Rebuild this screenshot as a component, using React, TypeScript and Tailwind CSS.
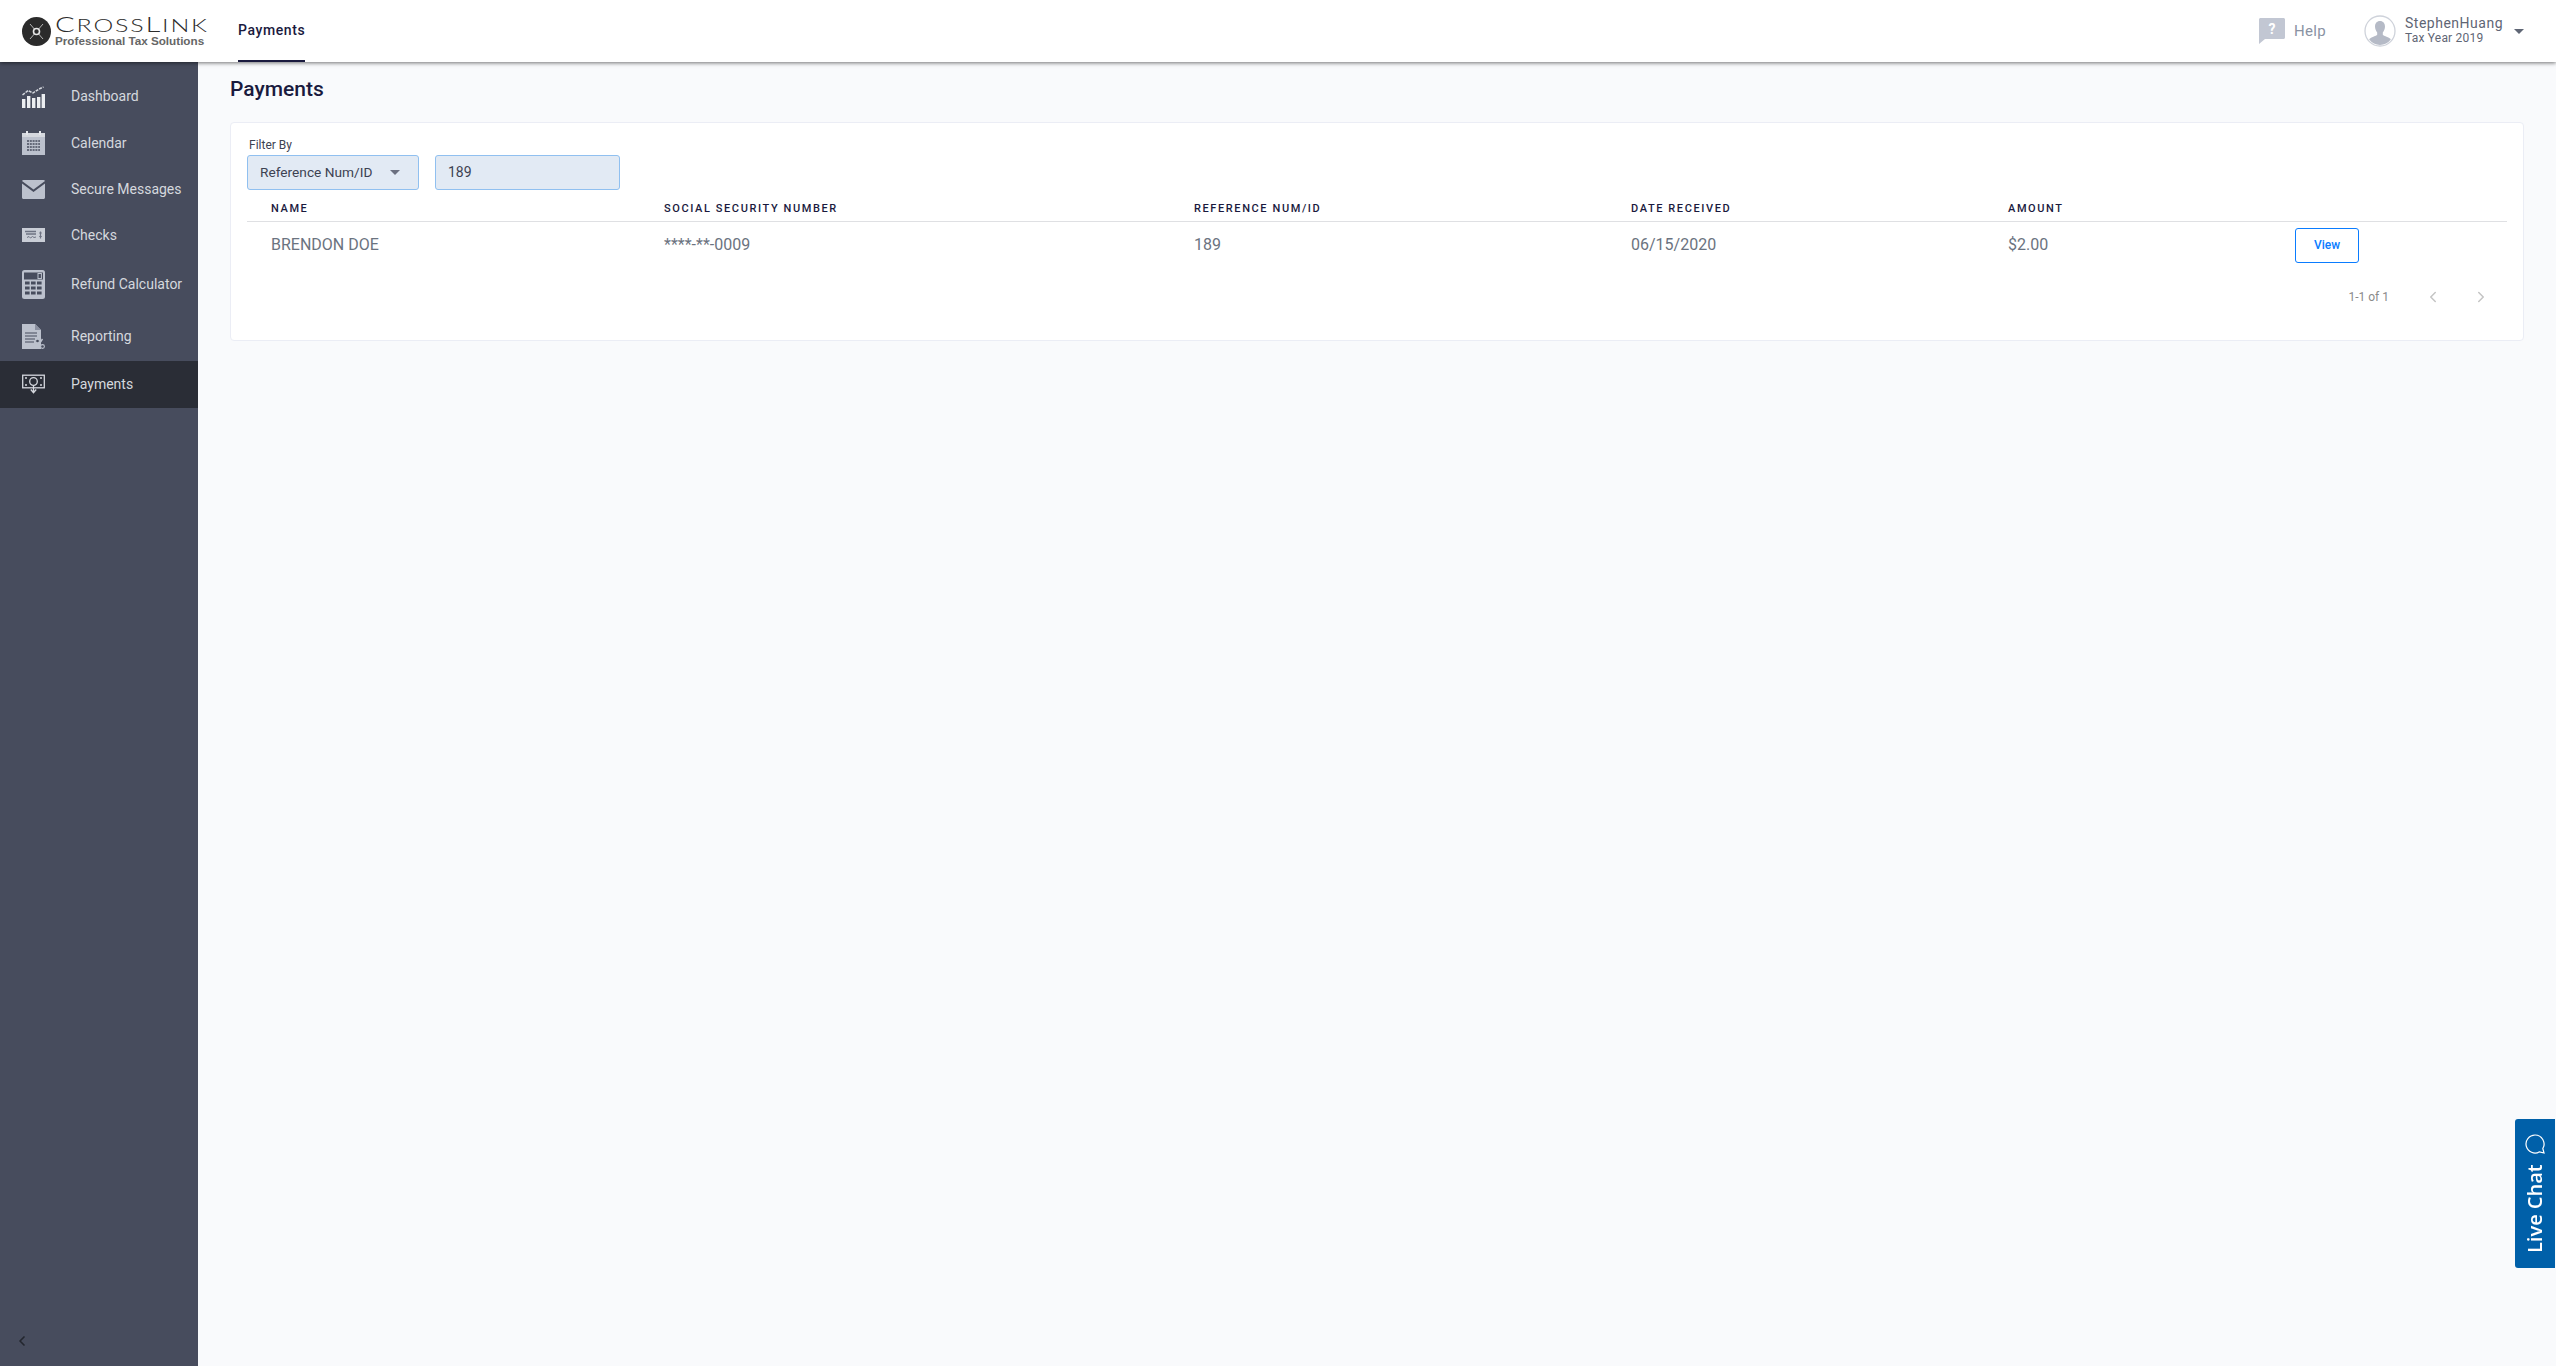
import { ChevronLeft, ChevronRight } from "lucide-react";

const roboto = "font-['Roboto',sans-serif]";

function DashboardIcon() {
  return (
    <svg viewBox="0 0 23 23" className="h-[23px] w-[23px]" fill="#eceef1">
      <rect x="0" y="14" width="3.4" height="9" />
      <rect x="5" y="11" width="3.4" height="12" />
      <rect x="10" y="13" width="3.4" height="10" />
      <rect x="15" y="12" width="3.4" height="11" />
      <rect x="19.6" y="9" width="3.4" height="14" />
      <path d="M0.5 10 L6 5.500 L11 8 L17 4 L21.500 2" fill="none" stroke="#d5d8de" strokeWidth="1.5" strokeDasharray="3 1" />
    </svg>
  );
}

function CalendarIcon() {
  return (
    <svg viewBox="0 0 23 24" className="h-[24px] w-[23px]">
      <path d="M0 2h23v22H0z" fill="#bcc1cd" />
      <rect x="0" y="2" width="23" height="4" fill="#d5d8de" />
      <rect x="4" y="0" width="2" height="4" fill="#e4e6eb" />
      <rect x="17" y="0" width="2" height="4" fill="#e4e6eb" />
      <path d="M5 10h13M5 13h13M5 16h13M5 19h13" stroke="#474c5d" strokeWidth="1.6" strokeDasharray="2 0.8" />
    </svg>
  );
}

function MailIcon() {
  return (
    <svg viewBox="0 0 23 19" className="h-[19px] w-[23px]" fill="#bcc1cd">
      <path d="M1.500 0h20c.6 0 1.200.4 1.500 1L11.500 9.500 0 1c.3-.6.9-1 1.500-1z" />
      <path d="M0 3.500V17.500C0 18.300.7 19 1.500 19h20c.8 0 1.500-.7 1.500-1.500V3.500L11.500 12z" />
    </svg>
  );
}

function CheckIcon() {
  return (
    <svg viewBox="0 0 23 14" className="h-[14px] w-[23px]">
      <rect width="23" height="14" fill="#c9cdd6" />
      <path d="M3 3.500h11M4 6h10" stroke="#6e7383" strokeWidth="1.3" />
      <path d="M5 9.500l2-1 1.500 1.500 2-1.500 1.500 1 2-.5" stroke="#6e7383" strokeWidth="1" fill="none" />
      <path d="M18.500 3.500v7M17.200 5h2.600M17.200 8.500h2.600" stroke="#6e7383" strokeWidth="1.2" />
    </svg>
  );
}

function CalculatorIcon() {
  const cells = [9.5, 14.5, 19.5].flatMap((y) => [3, 9, 15].map((x) => ({ x, y })));
  return (
    <svg viewBox="0 0 23 29" className="h-[29px] w-[23px]">
      <rect width="23" height="29" rx="2.500" fill="#bcc1cd" />
      <rect x="2" y="2.500" width="19" height="7" fill="#474c5d" />
      <rect x="16" y="3.500" width="3.400" height="5" fill="none" stroke="#bcc1cd" strokeWidth="1" />
      {cells.map((c) => (
        <rect key={`${c.x}-${c.y}`} x={c.x} y={c.y + 2} width="4.600" height="3" fill="#474c5d" />
      ))}
    </svg>
  );
}

function ReportIcon() {
  return (
    <svg viewBox="0 0 23 25" className="h-[25px] w-[23px]">
      <path d="M0 0h13l6 6v19H0z" fill="#bcc1cd" />
      <path d="M13 0l6 6h-6z" fill="#8b90a0" />
      <path d="M3 9h12M3 12h12M3 15h10M3 18h9" stroke="#6e7383" strokeWidth="1.3" />
      <path d="M14.500 24l6-9" stroke="#bcc1cd" strokeWidth="1.4" />
      <circle cx="15.500" cy="17" r="1.900" fill="#474c5d" stroke="#bcc1cd" strokeWidth="1.1" />
      <circle cx="20.500" cy="22.500" r="1.900" fill="#474c5d" stroke="#bcc1cd" strokeWidth="1.1" />
    </svg>
  );
}

function PaymentIcon() {
  return (
    <svg viewBox="0 0 23 21" className="h-[21px] w-[23px]" fill="none" stroke="#d5d8de" strokeWidth="1.3">
      <rect x="0.7" y="1.200" width="21.600" height="12.600" fill="#2a2d36" />
      <circle cx="11.500" cy="7.500" r="3.800" />
      <path d="M3 4h2M18 4h2M3 11h2M18 11h2" />
      <path d="M11.500 11.500v6M8.800 15.500l2.700 3.200 2.700-3.200" />
    </svg>
  );
}

const navItems = [
  { label: "Dashboard", h: "h-[47px]", icon: <DashboardIcon /> },
  { label: "Calendar", h: "h-[46px]", icon: <CalendarIcon /> },
  { label: "Secure Messages", h: "h-[46px]", icon: <MailIcon /> },
  { label: "Checks", h: "h-[46px]", icon: <CheckIcon /> },
  { label: "Refund Calculator", h: "h-[53px]", icon: <CalculatorIcon /> },
  { label: "Reporting", h: "h-[50px]", icon: <ReportIcon /> },
  { label: "Payments", h: "h-[47px]", icon: <PaymentIcon />, active: true },
];

function Sidebar() {
  return (
    <aside className="flex w-[198px] shrink-0 flex-col justify-between bg-[#474c5d] pt-[11px]">
      <nav>
        {navItems.map((item) => (
          <div
            key={item.label}
            className={`flex items-center pl-[22px] ${item.h} ${item.active ? "bg-[#2a2d36]" : ""}`}
          >
            <span className="flex w-[49px] shrink-0">{item.icon}</span>
            <span className="text-[14px] text-[#d5d8de]">{item.label}</span>
          </div>
        ))}
      </nav>
      <div className="pb-[17px] pl-[14px]">
        <ChevronLeft className="size-[16px] text-[#23262e]" strokeWidth={2.5} aria-hidden />
      </div>
    </aside>
  );
}

function Logo() {
  return (
    <div className="flex w-[185px] shrink-0 items-center gap-[4px]">
      <svg viewBox="0 0 29 29" className="h-[29px] w-[29px] shrink-0">
        <circle cx="14.500" cy="14.500" r="14.500" fill="#2b2b2b" />
        <path d="M8 7l13 15M21 7L8 22" stroke="#b5b5b5" strokeWidth="1" />
        <circle cx="14.500" cy="14.500" r="3" fill="#2b2b2b" stroke="#e8e8e8" strokeWidth="1.600" />
      </svg>
      <div className="flex flex-col whitespace-nowrap">
        <span className="origin-left scale-x-[1.39] font-['Lato',sans-serif] text-[18px] font-light leading-[17px] tracking-[1.3px] text-[#2b2b2b]">
          <span className="text-[21px]">C</span>ROSS<span className="text-[21px]">L</span>INK
        </span>
        <span className="font-['Liberation_Sans',sans-serif] text-[11.7px] font-bold leading-[13px] text-[#666666]">
          Professional Tax Solutions
        </span>
      </div>
    </div>
  );
}

function Header() {
  return (
    <header className="relative z-10 flex h-[62px] shrink-0 items-center justify-between bg-white pl-[22px] pr-[32px] shadow-[0_1px_4px_rgba(0,0,0,0.55)]">
      <div className="flex h-full items-center">
        <Logo />
        <div className="ml-[31px] flex h-full items-center border-b-[2px] border-[#1a1a3e]">
          <span className="text-[14px] font-medium tracking-[0.6px] text-[#1a1a3e]">Payments</span>
        </div>
      </div>
      <div className="flex items-center">
        <svg viewBox="0 0 26 26" className="h-[26px] w-[26px]">
          <path d="M1.500 0h23c.8 0 1.500.7 1.500 1.500v18c0 .8-.7 1.500-1.500 1.500H6l-6 5V1.500C0 .7.7 0 1.500 0z" fill="#c2c7d3" />
          <text x="13" y="16" textAnchor="middle" fontSize="14" fontWeight="700" fill="#fff" fontFamily="Roboto, sans-serif">?</text>
        </svg>
        <span className="ml-[9px] text-[15px] tracking-[0.3px] text-[#8a92a3]">Help</span>
        <svg viewBox="0 0 32 32" className="ml-[38px] h-[32px] w-[32px]">
          <circle cx="16" cy="16" r="15" fill="#fff" stroke="#ced2da" strokeWidth="1.300" />
          <path d="M16 6c3.200 0 5 2.400 5 5.600 0 2.400-1 4.600-2.200 5.800v2.200c0 1 3.600 2 6.800 3.600.6.3 1 .8 1.200 1.400A14 14 0 0 1 16 30a14 14 0 0 1-10.800-5.400c.2-.6.6-1.100 1.200-1.400 3.200-1.600 6.800-2.600 6.800-3.600v-2.200C12 16.200 11 14 11 11.600 11 8.400 12.800 6 16 6z" fill="#b5bac6" />
        </svg>
        <div className="ml-[9px] flex flex-col">
          <span className="text-[14px] leading-[15px] tracking-[0.5px] text-[#5f6675]">StephenHuang</span>
          <span className="text-[12px] leading-[15px] tracking-[0.2px] text-[#5f6675]">Tax Year 2019</span>
        </div>
        <span className="ml-[11px] h-0 w-0 border-x-[5px] border-t-[5px] border-x-transparent border-t-[#5f6675]" />
      </div>
    </header>
  );
}

const columns = "grid grid-cols-[393px_530px_437px_377px_1fr] pl-[24px]";

function PaymentsCard() {
  return (
    <section className="mt-[20px] h-[219px] rounded-[4px] border border-[#ebedf5] bg-white pl-[16px] pr-[16px]">
      <label className="ml-[2px] mt-[14px] block text-[12px] leading-[16px] text-[#3d4252]">Filter By</label>
      <div className="mt-[2px] flex gap-[16px]">
        <div className="flex h-[35px] w-[172px] items-center justify-between rounded-[3px] border border-[#90c0f0] bg-[#e2eaf4] pl-[12px] pr-[18px] text-[13.7px] text-[#3d4252]">
          <span>Reference Num/ID</span>
          <span className="h-0 w-0 border-x-[5px] border-t-[5px] border-x-transparent border-t-[#6b7080]" />
        </div>
        <div className="flex h-[35px] w-[185px] items-center rounded-[3px] border border-[#90c0f0] bg-[#e2eaf4] pl-[12px] text-[14px] text-[#3d4252]">
          189
        </div>
      </div>
      <div className={`${columns} mt-[9px] h-[23px] items-center border-b border-[#dfe0e3] pb-[1px] text-[11px] font-medium tracking-[1.6px] text-[#1a1a3e]`}>
        <span>NAME</span>
        <span>SOCIAL SECURITY NUMBER</span>
        <span>REFERENCE NUM/ID</span>
        <span>DATE RECEIVED</span>
        <span>AMOUNT</span>
      </div>
      <div className={`${columns} h-[46px] items-center text-[16px] text-[#6b7380]`}>
        <span>BRENDON DOE</span>
        <span>****-**-0009</span>
        <span>189</span>
        <span>06/15/2020</span>
        <div className="flex items-center justify-between pr-[148px]">
          <span>$2.00</span>
          <button type="button" className="h-[35px] w-[64px] rounded-[3px] border border-[#0a7cff] text-[12px] font-medium text-[#0a7cff]">
            View
          </button>
        </div>
      </div>
      <div className="mt-[20px] flex items-center justify-end pr-[17px] text-[#8a8a8a]">
        <span className="text-[12px]">1-1 of 1</span>
        <ChevronLeft className="ml-[35px] size-[18px] text-[#c4c4c4]" aria-hidden />
        <ChevronRight className="ml-[30px] size-[18px] text-[#c4c4c4]" aria-hidden />
      </div>
    </section>
  );
}

function LiveChat() {
  return (
    <div className="fixed bottom-[98px] right-[1px] flex h-[149px] w-[40px] rotate-180 items-center justify-center gap-[10px] rounded-r-[3px] bg-[#0060a9] text-white [writing-mode:vertical-rl]">
      <span className="font-['Open_Sans',sans-serif] text-[20px] font-semibold">Live Chat</span>
      <svg viewBox="0 0 20 20" className="h-[20px] w-[20px] rotate-180" fill="none" stroke="#fff" strokeWidth="1.2">
        <path d="M10 1a9 9 0 1 0 4.500 16.800L19 19l-1.200-4.500A9 9 0 0 0 10 1z" />
      </svg>
    </div>
  );
}

export default function App() {
  return (
    <div className={`flex h-screen flex-col overflow-hidden bg-[#f9fafc] ${roboto}`}>
      <Header />
      <div className="flex min-h-0 flex-1">
        <Sidebar />
        <main className="flex-1 pl-[32px] pr-[32px] pt-[14px]">
          <h1 className="text-[21px] font-medium leading-[26px] text-[#1a1a3e]">Payments</h1>
          <PaymentsCard />
        </main>
      </div>
      <LiveChat />
    </div>
  );
}
